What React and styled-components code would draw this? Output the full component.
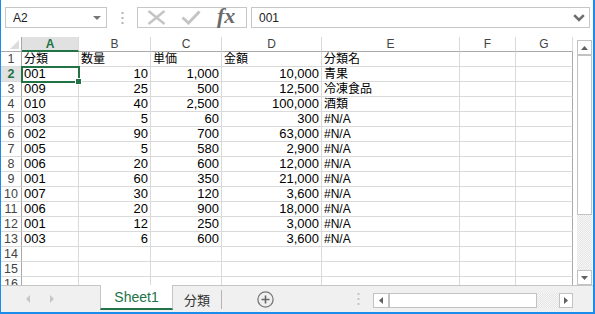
import React from 'react'
import styled, { createGlobalStyle, css } from 'styled-components'

const GREEN = '#217346'
const GRID = '#dadada'
const EDGE = '#a9a9a9'

const GlobalStyle = createGlobalStyle`
  body {
    margin: 0;
    font-family: "Liberation Sans", "Noto Sans CJK JP", sans-serif;
  }
`

const Window = styled.div`
  width: 595px;
  height: 314px;
  box-sizing: border-box;
  border-left: 1px solid #1a8ceb;
  border-right: 2px solid #1a8ceb;
  border-bottom: 2px solid #1a8ceb;
  background: #fff;
  display: flex;
  flex-direction: column;
  overflow: hidden;
`

/* ---------- formula bar ---------- */
const FormulaBar = styled.div`
  height: 37px;
  box-sizing: border-box;
  padding: 7px 3px 0 4px;
  display: flex;
  align-items: flex-start;
`
const Box = styled.div`
  height: 21px;
  box-sizing: border-box;
  border: 1px solid #c6c6c6;
  display: flex;
  align-items: center;
  font-size: 12px;
  color: #222;
`
const NameBox = styled(Box)`
  width: 102px;
  padding: 0 5px 0 7px;
  justify-content: space-between;
`
const DropTri = styled.span`
  width: 0;
  height: 0;
  border-left: 4px solid transparent;
  border-right: 4px solid transparent;
  border-top: 4px solid #777;
`
const Grip = styled.div`
  width: ${p => p.$w || 30}px;
  height: ${p => p.$h || 21}px;
  display: flex;
  align-items: center;
  justify-content: center;
`
const FuncBox = styled(Box)`
  width: 110px;
  padding-left: 9px;
  gap: 15px;
`
const Fx = styled.span`
  font-family: "Liberation Serif", serif;
  font-style: italic;
  font-weight: bold;
  font-size: 22px;
  color: #6a6a6a;
  line-height: 1;
  margin-top: -3px;
  margin-left: 1px;
`
const FormulaInput = styled(Box)`
  flex: 1;
  margin-left: 4px;
  padding: 0 4px 0 7px;
  justify-content: space-between;
`

/* ---------- sheet ---------- */
const Sheet = styled.div`
  height: 248px;
  display: flex;
`
const Grid = styled.div`
  width: 572px;
  height: 248px;
  overflow: hidden;
  display: grid;
  grid-template-columns: 21px 57px 72px 71px 100px 138px 56px 57px;
  grid-auto-rows: 15px;
  align-content: start;
`
const narrowFont = css`
  font-family: "Liberation Sans Narrow", "Liberation Sans", sans-serif;
  font-size: 13px;
`
const Cell = styled.div`
  box-sizing: border-box;
  border-right: 1px solid ${p => (p.$last ? EDGE : GRID)};
  border-bottom: 1px solid ${GRID};
  font-size: 12px;
  line-height: 14px;
  color: #000;
  white-space: nowrap;
  overflow: hidden;
  padding: 0 2px;
  text-align: ${p => (p.$right ? 'right' : 'left')};
  ${p => p.$narrow && narrowFont}
  ${p =>
    p.$selected &&
    css`
      position: relative;
      overflow: visible;
      outline: 2px solid ${GREEN};
      outline-offset: -1px;
      z-index: 1;
      &::after {
        content: '';
        position: absolute;
        right: -4px;
        bottom: -4px;
        width: 5px;
        height: 5px;
        background: ${GREEN};
        border: 1px solid #fff;
      }
    `}
`
const Corner = styled.div`
  box-sizing: border-box;
  border-right: 1px solid ${EDGE};
  border-bottom: 1px solid ${EDGE};
  display: flex;
  align-items: flex-end;
  justify-content: flex-end;
  padding: 0 2px 2px 0;
`
const ColHead = styled.div`
  box-sizing: border-box;
  border-right: 1px solid ${GRID};
  border-bottom: ${p => (p.$active ? `2px solid ${GREEN}` : `1px solid ${EDGE}`)};
  background: ${p => (p.$active ? '#e1e1e1' : '#fff')};
  color: ${p => (p.$active ? GREEN : '#444')};
  font-weight: ${p => (p.$active ? 'bold' : 'normal')};
  font-size: 12px;
  line-height: 14px;
  text-align: center;
`
const RowHead = styled.div`
  box-sizing: border-box;
  border-right: 1px solid ${EDGE};
  border-bottom: 1px solid ${GRID};
  background: ${p => (p.$active ? '#e1e1e1' : '#fff')};
  color: ${p => (p.$active ? GREEN : '#444')};
  font-weight: ${p => (p.$active ? 'bold' : 'normal')};
  ${narrowFont}
  font-size: 12.5px;
  line-height: 14px;
  text-align: center;
`

/* ---------- scrollbars ---------- */
const checker = css`
  background: repeating-conic-gradient(#e6e6e6 0 25%, #f6f6f6 0 50%) 0 0 / 2px 2px;
`
const VScroll = styled.div`
  width: 15px;
  margin-left: 4px;
  padding-top: 3px;
  display: flex;
  flex-direction: column;
`
const ScrollBtn = styled.div`
  flex: none;
  width: ${p => p.$w || 15}px;
  height: 15px;
  box-sizing: border-box;
  border: 1px solid #c2c2c2;
  background: #fff;
  display: flex;
  align-items: center;
  justify-content: center;
`
const VThumb = styled.div`
  height: ${p => p.$size}px;
  box-sizing: border-box;
  border: 1px solid #c2c2c2;
  background: #fff;
`
const Track = styled.div`
  flex: 1;
  ${checker}
`
const HScroll = styled.div`
  width: 200px;
  height: 15px;
  margin-top: 7px;
  display: flex;
`
const HThumb = styled.div`
  width: ${p => p.$size}px;
  box-sizing: border-box;
  border: 1px solid #c2c2c2;
  background: #fff;
`

/* ---------- sheet tabs ---------- */
const TabBar = styled.div`
  height: 27px;
  box-sizing: border-box;
  border-top: 1px solid #c6c6c6;
  background: #f0f0f0;
  display: flex;
  align-items: flex-start;
`
const TabNav = styled.div`
  width: 99px;
  height: 26px;
  display: flex;
  align-items: center;
  padding-left: 25px;
  box-sizing: border-box;
  gap: 20px;
`
const Tab = styled.div`
  box-sizing: border-box;
  display: flex;
  align-items: center;
  justify-content: center;
  ${p =>
    p.$active
      ? css`
          width: 73px;
          height: 25px;
          margin-top: -1px;
          background: #fff;
          border-left: 1px solid #c6c6c6;
          border-right: 1px solid #c6c6c6;
          border-bottom: 2px solid ${GREEN};
          color: ${GREEN};
          font-size: 14px;
        `
      : css`
          width: 49px;
          height: 19px;
          margin-top: 4px;
          border-right: 1px solid #b5b5b5;
          color: #333;
          font-family: "Noto Sans CJK JP", sans-serif;
          font-size: 13px;
        `}
`
const AddSheet = styled.div`
  width: 86px;
  height: 26px;
  display: flex;
  align-items: center;
  justify-content: center;
`

const Tri = ({ dir, color = '#606060', w = 7, h = 4 }) => {
  const pts = {
    up: `0,${h} ${w / 2},0 ${w},${h}`,
    down: `0,0 ${w / 2},${h} ${w},0`,
    left: `${w},0 0,${h / 2} ${w},${h}`,
    right: `0,0 ${w},${h / 2} 0,${h}`,
  }[dir]
  return (
    <svg width={w} height={h} viewBox={`0 0 ${w} ${h}`}>
      <polygon points={pts} fill={color} />
    </svg>
  )
}

const Dots = ({ color = '#b4b4b4' }) => (
  <svg width="3" height="12" viewBox="0 0 3 12">
    <rect x="0.5" y="0" width="2" height="2" fill={color} />
    <rect x="0.5" y="5" width="2" height="2" fill={color} />
    <rect x="0.5" y="10" width="2" height="2" fill={color} />
  </svg>
)

const columns = ['A', 'B', 'C', 'D', 'E', 'F', 'G']

const data = [
  ['分類', '数量', '単価', '金額', '分類名'],
  ['001', '10', '1,000', '10,000', '青果'],
  ['009', '25', '500', '12,500', '冷凍食品'],
  ['010', '40', '2,500', '100,000', '酒類'],
  ['003', '5', '60', '300', '#N/A'],
  ['002', '90', '700', '63,000', '#N/A'],
  ['005', '5', '580', '2,900', '#N/A'],
  ['006', '20', '600', '12,000', '#N/A'],
  ['001', '60', '350', '21,000', '#N/A'],
  ['007', '30', '120', '3,600', '#N/A'],
  ['006', '20', '900', '18,000', '#N/A'],
  ['001', '12', '250', '3,000', '#N/A'],
  ['003', '6', '600', '3,600', '#N/A'],
  [],
  [],
  [],
]

const isDigits = v => /^[\d,]+$/.test(v || '')

const SheetGrid = () => (
  <Grid>
    <Corner>
      <svg width="9" height="9" viewBox="0 0 9 9">
        <polygon points="9,0 9,9 0,9" fill="#dcdcdc" />
      </svg>
    </Corner>
    {columns.map(c => (
      <ColHead key={c} $active={c === 'A'}>{c}</ColHead>
    ))}
    {data.map((row, r) => (
      <React.Fragment key={r}>
        <RowHead $active={r === 1}>{r + 1}</RowHead>
        {columns.map((c, i) => {
          const v = row[i]
          const numeric = r > 0 && i >= 1 && i <= 3
          return (
            <Cell
              key={c}
              $right={numeric}
              $narrow={isDigits(v)}
              $last={i === columns.length - 1}
              $selected={r === 1 && i === 0}
            >
              {v}
            </Cell>
          )
        })}
      </React.Fragment>
    ))}
  </Grid>
)

const App = () => (
  <Window>
    <GlobalStyle />
    <FormulaBar>
      <NameBox>
        A2
        <DropTri />
      </NameBox>
      <Grip>
        <Dots />
      </Grip>
      <FuncBox>
        <svg width="19" height="15" viewBox="0 0 19 15">
          <path d="M1.5 1 L17.5 14 M17.5 1 L1.5 14" stroke="#c4c4c4" strokeWidth="2.4" fill="none" />
        </svg>
        <svg width="20" height="15" viewBox="0 0 20 15">
          <path d="M1.5 7.5 L7.5 13 L18.5 1.5" stroke="#c4c4c4" strokeWidth="3" fill="none" />
        </svg>
        <Fx>fx</Fx>
      </FuncBox>
      <FormulaInput>
        001
        <svg width="12" height="8" viewBox="0 0 12 8">
          <path d="M1.2 1.2 L6 6 L10.8 1.2" stroke="#6d6d6d" strokeWidth="2.6" fill="none" />
        </svg>
      </FormulaInput>
    </FormulaBar>

    <Sheet>
      <SheetGrid />
      <VScroll>
        <ScrollBtn><Tri dir="up" /></ScrollBtn>
        <VThumb $size={160} />
        <Track />
        <ScrollBtn><Tri dir="down" /></ScrollBtn>
      </VScroll>
    </Sheet>

    <TabBar>
      <TabNav>
        <Tri dir="left" color="#c6c6c6" w={4} h={8} />
        <Tri dir="right" color="#c6c6c6" w={4} h={8} />
      </TabNav>
      <Tab $active>Sheet1</Tab>
      <Tab>分類</Tab>
      <AddSheet>
        <svg width="17" height="17" viewBox="0 0 17 17">
          <circle cx="8.5" cy="8.5" r="7.6" stroke="#777" strokeWidth="1.3" fill="none" />
          <path d="M8.5 4.5 V12.5 M4.5 8.5 H12.5" stroke="#666" strokeWidth="1.6" />
        </svg>
      </AddSheet>
      <Grip $w={16} $h={26} style={{ marginLeft: 42, marginRight: 7 }}>
        <Dots color="#c4c4c4" />
      </Grip>
      <HScroll>
        <ScrollBtn $w={16}><Tri dir="left" w={4} h={7} /></ScrollBtn>
        <HThumb $size={148} />
        <Track />
        <ScrollBtn $w={14}><Tri dir="right" w={4} h={7} /></ScrollBtn>
      </HScroll>
    </TabBar>
  </Window>
)

export default App
